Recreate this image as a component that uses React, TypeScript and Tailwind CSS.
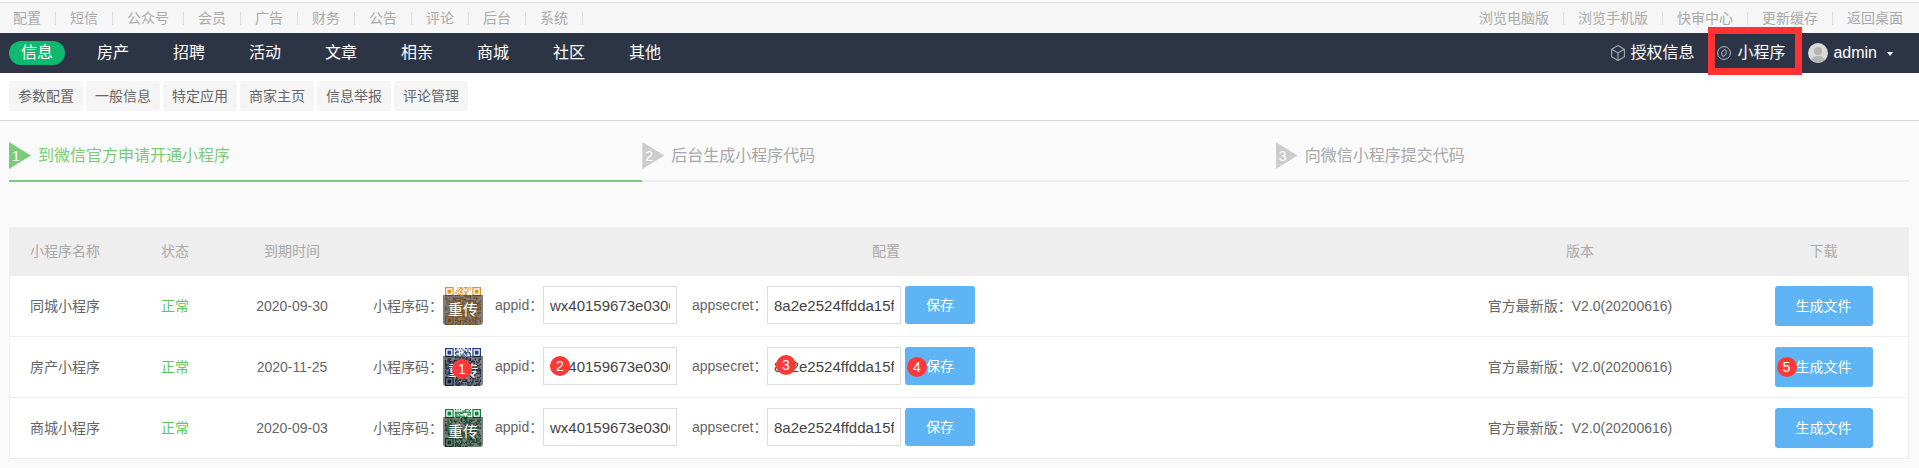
import { ReactNode } from 'react'

const topLeft = ['配置', '短信', '公众号', '会员', '广告', '财务', '公告', '评论', '后台', '系统']
const topRight = ['浏览电脑版', '浏览手机版', '快审中心', '更新缓存', '返回桌面']
const navItems = ['房产', '招聘', '活动', '文章', '相亲', '商城', '社区', '其他']
const subNav = ['参数配置', '一般信息', '特定应用', '商家主页', '信息举报', '评论管理']

const steps = [
  { n: 1, label: '到微信官方申请开通小程序', active: true },
  { n: 2, label: '后台生成小程序代码', active: false },
  { n: 3, label: '向微信小程序提交代码', active: false },
]

const rows = [
  { name: '同城小程序', date: '2020-09-30', color: '#e8912c', seed: 17 },
  { name: '房产小程序', date: '2020-11-25', color: '#23407f', seed: 91, marks: true },
  { name: '商城小程序', date: '2020-09-03', color: '#11803f', seed: 53 },
]

const gridCols = 'grid grid-cols-[120px_90px_144px_1044px_344px_1fr]'

function Badge({ n, className }: { n: number; className: string }) {
  return (
    <span
      className={`absolute z-10 flex h-[20px] w-[20px] items-center justify-center rounded-full bg-[#ff3838] text-[14px] leading-none text-white ${className}`}
    >
      {n}
    </span>
  )
}

function Finder({ x, y, color }: { x: number; y: number; color: string }) {
  return (
    <g>
      <path d={`M${x} ${y}h7v7h-7z M${x + 1} ${y + 1}v5h5v-5z`} fill={color} fillRule="evenodd" />
      <rect x={x + 2} y={y + 2} width="3" height="3" fill={color} />
    </g>
  )
}

function QrCode({ color, seed }: { color: string; seed: number }) {
  const size = 29
  const cells: ReactNode[] = []
  let s = seed
  for (let y = 0; y < size; y++) {
    for (let x = 0; x < size; x++) {
      s = (s * 1103515245 + 12345) & 0x7fffffff
      const inFinder = (x < 8 && y < 8) || (x > 20 && y < 8) || (x < 8 && y > 20)
      if (!inFinder && (s >> 16) % 2 === 0) {
        cells.push(<rect key={`${x}-${y}`} x={x} y={y} width="1" height="1" fill={color} />)
      }
    }
  }
  return (
    <svg viewBox="0 0 29 29" preserveAspectRatio="none" className="h-[38px] w-[36px]">
      {cells}
      <Finder x={0} y={0} color={color} />
      <Finder x={22} y={0} color={color} />
      <Finder x={0} y={22} color={color} />
    </svg>
  )
}

function Step({ n, label, active }: { n: number; label: string; active: boolean }) {
  return (
    <div className={`flex flex-1 items-center pb-[11px] border-b-2 ${active ? 'border-[#7ccb7c]' : 'border-[#eeeeee]'}`}>
      <div
        className={`flex h-[27px] w-[22px] items-center pl-[3px] text-[14px] leading-none text-white [clip-path:polygon(0_0,100%_50%,0_100%)] ${
          active ? 'bg-[#7ccb7c]' : 'bg-[#cccccc]'
        }`}
      >
        {n}
      </div>
      <span className={`ml-[7px] text-[16px] leading-[27px] ${active ? 'text-[#7ccb7c]' : 'text-[#a8a8a8]'}`}>{label}</span>
    </div>
  )
}

function ConfigInput({ value, mark, markClass }: { value: string; mark?: number; markClass?: string }) {
  return (
    <div className="relative">
      <input
        readOnly
        value={value}
        className="block h-[38px] w-[134px] border border-[#dddddd] bg-white px-[6px] text-[15px] text-[#444444] outline-none"
      />
      {mark && <Badge n={mark} className={markClass ?? ''} />}
    </div>
  )
}

export default function App() {
  return (
    <div
      className="h-[468px] w-[1919px] overflow-hidden bg-white text-[14px]"
      style={{ fontFamily: '"Liberation Sans", "Noto Sans CJK SC", sans-serif' }}
    >
      {/* Top bar */}
      <div className="mt-[2px] flex h-[31px] items-center justify-between border-t border-[#dddddd] bg-[#f6f6f6] pl-[13px] pr-[16px] text-[#aaaaaa]">
        <div className="flex items-center">
          {topLeft.map((item) => (
            <div key={item} className="flex items-center">
              <span>{item}</span>
              <span className="mx-[14px] h-[13px] w-px bg-[#dddddd]" />
            </div>
          ))}
        </div>
        <div className="flex items-center">
          {topRight.map((item, i) => (
            <div key={item} className="flex items-center">
              {i > 0 && <span className="mx-[14px] h-[13px] w-px bg-[#dddddd]" />}
              <span>{item}</span>
            </div>
          ))}
        </div>
      </div>

      {/* Main nav */}
      <div className="relative flex h-[40px] items-center justify-between bg-[#2d3446] pl-[9px] pr-[26px] text-[16px] text-white">
        <div className="flex items-center gap-[44px]">
          <span className="-mr-[12px] flex h-[24px] w-[56px] items-center justify-center rounded-full bg-[#0fb96f]">信息</span>
          {navItems.map((item) => (
            <span key={item}>{item}</span>
          ))}
        </div>
        <div className="flex items-center">
          <svg viewBox="1.5 0.5 13 15" className="h-[16px] w-[14px] text-[#a9adb6]" fill="none" stroke="currentColor" strokeWidth="1">
            <path d="M8 1l6 3.5v7L8 15l-6-3.5v-7z" />
            <path d="M2 4.5L8 8l6-3.5M8 8v7" />
          </svg>
          <span className="ml-[5px]">授权信息</span>
          <svg viewBox="0 0 14 14" className="ml-[23px] h-[14px] w-[14px] text-[#b5b8c0]" fill="none" stroke="currentColor" strokeWidth="1">
            <circle cx="7" cy="7" r="6.4" />
            <path d="M6 5.3a1.6 1.6 0 0 1 3.2 0v2a1.6 1.6 0 0 1-1.4 1.6M8 8.7a1.6 1.6 0 0 1-3.2 0v-2a1.6 1.6 0 0 1 1.4-1.6" />
          </svg>
          <span className="ml-[6px]">小程序</span>
          <div className="ml-[23px] flex h-[20px] w-[20px] items-end justify-center overflow-hidden rounded-full bg-[#d9d9d9]">
            <svg viewBox="0 0 20 20" className="h-[20px] w-[20px] text-[#b4b4b4]" fill="currentColor">
              <circle cx="10" cy="8" r="4" />
              <path d="M3 20c0-5 3-7 7-7s7 2 7 7z" />
            </svg>
          </div>
          <span className="ml-[5px]">admin</span>
          <span className="ml-[10px] mt-px h-0 w-0 border-x-[3px] border-t-[4px] border-x-transparent border-t-white" />
        </div>

        {/* Red highlight on the mini program entry */}
        <div className="pointer-events-none absolute left-[1708px] top-[-6px] h-[48px] w-[94px] border-[7px] border-[#ff3333]" />
      </div>

      {/* Sub nav */}
      <div className="flex h-[48px] items-start gap-[3px] border-b border-[#d5d5d5] pl-[9px] pt-[8px]">
        {subNav.map((item) => (
          <span key={item} className="flex h-[30px] w-[74px] items-center justify-center rounded-[3px] bg-[#f5f5f5] text-[#666666]">
            {item}
          </span>
        ))}
      </div>

      <div className="h-[347px] bg-[#fafafa] px-[9px] pt-[21px]">
        {/* Steps */}
        <div className="flex w-[1900px]">
          {steps.map((step) => (
            <Step key={step.n} {...step} />
          ))}
        </div>

        {/* Table */}
        <div className="mt-[45px] w-[1900px] border-x border-[#eeeeee] bg-white">
          <div className={`${gridCols} h-[49px] items-center bg-[#eeeeee] text-center text-[#aaaaaa]`}>
            <span className="pl-[20px] text-left">小程序名称</span>
            <span>状态</span>
            <span>到期时间</span>
            <span>配置</span>
            <span>版本</span>
            <span className="pr-[13px]">下载</span>
          </div>
          {rows.map((row) => (
            <div key={row.name} className={`${gridCols} h-[61px] items-center border-b border-[#eeeeee] text-center text-[#666666]`}>
              <span className="pl-[20px] text-left">{row.name}</span>
              <span className="text-[#5cc85c]">正常</span>
              <span>{row.date}</span>
              <div className="flex items-center pl-[9px] text-left">
                <span className="w-[70px]">小程序码：</span>
                <div className="relative flex h-[38px] w-[40px] justify-center">
                  <QrCode color={row.color} seed={row.seed} />
                  <div className="absolute inset-x-0 bottom-0 flex h-[30px] items-center justify-center rounded-b-[3px] bg-[rgba(0,0,0,0.5)] text-[15px] text-white">
                    重传
                  </div>
                  {row.marks && <Badge n={1} className="left-[9px] top-[11px]" />}
                </div>
                <div className="mb-[2px] ml-[12px] flex items-center">
                  <span className="w-[48px]">appid：</span>
                  <ConfigInput value="wx40159673e0300c" mark={row.marks ? 2 : undefined} markClass="left-[7px] top-[9px]" />
                  <span className="ml-[15px] w-[75px]">appsecret：</span>
                  <ConfigInput value="8a2e2524ffdda15f9c" mark={row.marks ? 3 : undefined} markClass="left-[9px] top-[8px]" />
                  <div className="relative ml-[4px]">
                    <button className="block h-[38px] w-[70px] rounded-[3px] bg-[#5eb4f4] text-white">保存</button>
                    {row.marks && <Badge n={4} className="left-[2px] top-[10px]" />}
                  </div>
                </div>
              </div>
              <span>官方最新版：V2.0(20200616)</span>
              <div className="flex justify-center pr-[13px]">
                <div className="relative">
                  <button className="block h-[40px] w-[98px] rounded-[3px] bg-[#5eb4f4] text-white">生成文件</button>
                  {row.marks && <Badge n={5} className="left-[2px] top-[10px]" />}
                </div>
              </div>
            </div>
          ))}
        </div>
      </div>
    </div>
  )
}
